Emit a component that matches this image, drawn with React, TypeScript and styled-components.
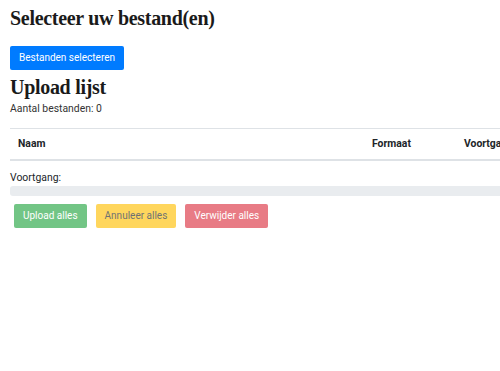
import React from 'react'
import styled, { createGlobalStyle } from 'styled-components'

const GlobalStyle = createGlobalStyle`
  html, body {
    margin: 0;
    padding: 0;
    background: #fff;
    overflow: hidden;
  }
  body {
    font-family: Roboto, 'Liberation Sans', sans-serif;
    font-size: 10.4px;
    color: #212529;
  }
`

const Page = styled.div`
  width: 540px;
  padding: 6px 10px 0 10px;
`

const Title = styled.h1<{ $gap?: number }>`
  margin: ${(p) => p.$gap ?? 0}px 0 0;
  font-family: 'Liberation Serif', serif;
  font-weight: 700;
  font-size: 20px;
  line-height: 24px;
  letter-spacing: -0.3px;
  color: #1a1a1a;
`

const Button = styled.button<{ $variant: 'primary' | 'success' | 'warning' | 'danger' }>`
  font-family: Roboto, 'Liberation Sans', sans-serif;
  font-size: 10px;
  line-height: 14px;
  padding: 4px 8px;
  border: 1px solid transparent;
  border-radius: 2px;
  cursor: pointer;
  color: ${(p) => (p.$variant === 'warning' ? '#212529' : '#fff')};
  background: ${(p) =>
    ({ primary: '#007bff', success: '#28a745', warning: '#ffc107', danger: '#dc3545' })[p.$variant]};
  &:disabled {
    opacity: 0.65;
    cursor: default;
  }
`

const SelectRow = styled.div`
  margin-top: 16px;
  display: flex;
`

const Count = styled.p`
  margin: 2px 0 0;
  line-height: 16px;
  color: #333;
`

const Table = styled.table`
  width: 100%;
  margin-top: 11px;
  border-collapse: collapse;
  table-layout: fixed;
`

const Th = styled.th<{ $width?: number }>`
  text-align: left;
  font-weight: 700;
  padding: 7.4px 8px;
  line-height: 15.6px;
  white-space: nowrap;
  border-top: 1px solid #dee2e6;
  border-bottom: 2px solid #dee2e6;
  width: ${(p) => (p.$width ? `${p.$width}px` : 'auto')};
`

const ProgressLabel = styled.div`
  margin-top: 9px;
  line-height: 16px;
`

const Progress = styled.div`
  height: 10px;
  background: #e9ecef;
  border-radius: 3px;
`

const Actions = styled.div`
  display: flex;
  gap: 9px;
  padding-left: 4px;
  margin-top: 8px;
`

export default function App() {
  return (
    <Page>
      <GlobalStyle />
      <Title>Selecteer uw bestand(en)</Title>
      <SelectRow>
        <Button $variant="primary">Bestanden selecteren</Button>
      </SelectRow>
      <Title $gap={5}>Upload lijst</Title>
      <Count>Aantal bestanden: 0</Count>
      <Table>
        <thead>
          <tr>
            <Th $width={338}>Naam</Th>
            <Th $width={76}>Formaat</Th>
            <Th>Voortgang</Th>
          </tr>
        </thead>
      </Table>
      <ProgressLabel>Voortgang:</ProgressLabel>
      <Progress />
      <Actions>
        <Button $variant="success" disabled>Upload alles</Button>
        <Button $variant="warning" disabled>Annuleer alles</Button>
        <Button $variant="danger" disabled>Verwijder alles</Button>
      </Actions>
    </Page>
  )
}
